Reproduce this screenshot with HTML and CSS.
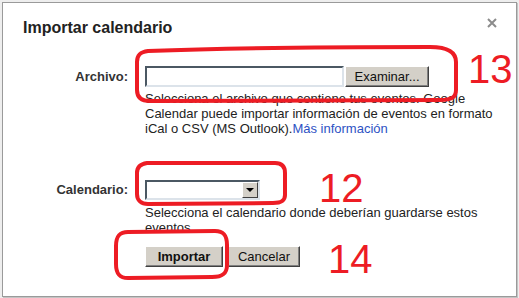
FILE: index.html
```html
<!DOCTYPE html>
<html lang="es">
<head>
    <meta charset="UTF-8">
    <meta name="viewport" content="width=device-width, initial-scale=1.0">
    <title>Importar calendario</title>
    <link rel="stylesheet" href="styles.css">
</head>
<body>
    <div class="dialog">
        <!-- Cabecera con título y botón de cerrar -->
        <div class="dialog-header">
            <h1 class="dialog-title">Importar calendario</h1>
            <svg class="close" width="10" height="10" viewBox="0 0 10 10">
                <path d="M1 1 L9 9 M9 1 L1 9" stroke="#8c8c8c" stroke-width="2" fill="none"/>
            </svg>
        </div>

        <!-- Campo de archivo -->
        <div class="field">
            <label class="field-label" for="archivo">Archivo:</label>
            <div class="field-body">
                <div class="file-line">
                    <div class="text-input" id="archivo"></div>
                    <button class="btn btn-browse">Examinar...</button>
                </div>
                <p class="hint">Selecciona el archivo que contiene tus eventos. Google<br>Calendar puede importar información de eventos en formato<br>iCal o CSV (MS Outlook).<a href="#">Más información</a></p>
            </div>
        </div>

        <!-- Campo de calendario -->
        <div class="field field-calendar">
            <label class="field-label field-label-select">Calendario:</label>
            <div class="field-body">
                <div class="select">
                    <div class="select-value"></div>
                    <div class="select-arrow"><span class="triangle"></span></div>
                </div>
                <p class="hint hint-select">Selecciona el calendario donde deberían guardarse estos<br>eventos</p>
                <div class="actions">
                    <button class="btn btn-primary">Importar</button>
                    <button class="btn btn-cancel">Cancelar</button>
                </div>
            </div>
        </div>
    </div>

    <!-- Marcas rojas dibujadas sobre la captura -->
    <svg class="annotations" width="519" height="298" viewBox="0 0 519 298">
        <g fill="none" stroke="#ed1c24" stroke-width="4" stroke-linejoin="round">
            <path d="M148 51 C200 49 300 47 430 47 C448 47 456 52 456 62 L456 90 C456 97 452 100 440 100 L150 101 C141 101 137 97 137 90 L137 62 C137 55 140 52 148 51 Z"/>
            <path d="M147 163 L275 163 C282 163 285 167 285 173 L285 195 C285 201 281 203 273 203 L148 204 C141 204 137 200 137 194 L137 173 C137 167 140 164 147 163 Z"/>
            <path d="M128 232 L215 231 C224 231 227 236 227 245 L227 265 C227 274 222 277 212 277 L128 278 C119 278 116 273 116 264 L116 246 C116 237 119 232 128 232 Z"/>
        </g>
        <g fill="#ed1c24" font-family="'Liberation Sans', Arial, sans-serif" font-size="40">
            <text x="468" y="83">13</text>
            <text x="319" y="202">12</text>
            <text x="328" y="273">14</text>
        </g>
    </svg>
</body>
</html>
```

FILE: styles.css
```css
/* Estilos generales */
body {
    margin: 0;
    padding: 0;
    width: 519px;
    height: 298px;
    overflow: hidden;
    position: relative;
    background-color: #eeeeee;
    font-family: "Liberation Sans", Arial, sans-serif;
    font-size: 13px;
    color: #222;
}

/* Ventana del diálogo */
.dialog {
    box-sizing: border-box;
    width: 515px;
    height: 295px;
    margin: 2px 0 0 2px;
    background-color: #fff;
    border: 1px solid #9a9a9a;
    box-shadow: 1px 1px 0 #c4c4c4;
    padding: 15px 19px 0 17px;
}

.dialog-header {
    display: flex;
    justify-content: space-between;
    align-items: flex-start;
    padding-left: 3px;
}

.dialog-title {
    margin: 0;
    font-size: 16px;
    line-height: 20px;
    font-weight: bold;
    color: #222;
}

.close {
    margin-top: 0;
}

/* Filas del formulario */
.field {
    display: grid;
    grid-template-columns: 108px 1fr;
    column-gap: 17px;
    margin-top: 28px;
}

.field-calendar {
    margin-top: 44px;
}

.field-label {
    text-align: right;
    font-weight: bold;
    line-height: 21px;
    color: #333;
}

.field-label-select {
    line-height: 20px;
}

.file-line {
    display: flex;
    gap: 1px;
}

/* Campo de texto hundido */
.text-input {
    box-sizing: border-box;
    width: 199px;
    height: 21px;
    border: 2px solid;
    border-color: #4b5863 #dce3ea #dce3ea #4b5863;
    background-color: #fff;
}

/* Botones de estilo clásico */
.btn {
    box-sizing: border-box;
    height: 21px;
    padding: 0;
    font-family: inherit;
    font-size: 13px;
    color: #111;
    background-color: #d4d0c8;
    border: 1px solid;
    border-color: #fff #404040 #404040 #fff;
    box-shadow: inset -1px -1px 0 #808080;
    cursor: pointer;
}

.btn-browse {
    width: 84px;
}

.btn-primary {
    width: 78px;
    font-weight: bold;
}

.btn-cancel {
    width: 72px;
}

/* Texto de ayuda */
.hint {
    margin: 4px 0 0 0;
    line-height: 15px;
    white-space: nowrap;
    color: #222;
}

.hint a {
    color: #2d52c4;
    text-decoration: none;
}

.hint-select {
    margin-top: 5px;
}

/* Desplegable */
.select {
    box-sizing: border-box;
    display: flex;
    width: 115px;
    height: 20px;
    border: 2px solid;
    border-color: #4b5863 #dce3ea #dce3ea #4b5863;
    background-color: #fff;
}

.select-value {
    flex: 1;
}

.select-arrow {
    box-sizing: border-box;
    width: 16px;
    display: flex;
    align-items: center;
    justify-content: center;
    background-color: #d4d0c8;
    border: 1px solid;
    border-color: #fff #404040 #404040 #fff;
}

.triangle {
    width: 0;
    height: 0;
    border-left: 4px solid transparent;
    border-right: 4px solid transparent;
    border-top: 4px solid #000;
}

.actions {
    display: flex;
    gap: 5px;
    margin-top: 11px;
}

/* Capa de anotaciones */
.annotations {
    position: absolute;
    top: 0;
    left: 0;
    pointer-events: none;
}
```
